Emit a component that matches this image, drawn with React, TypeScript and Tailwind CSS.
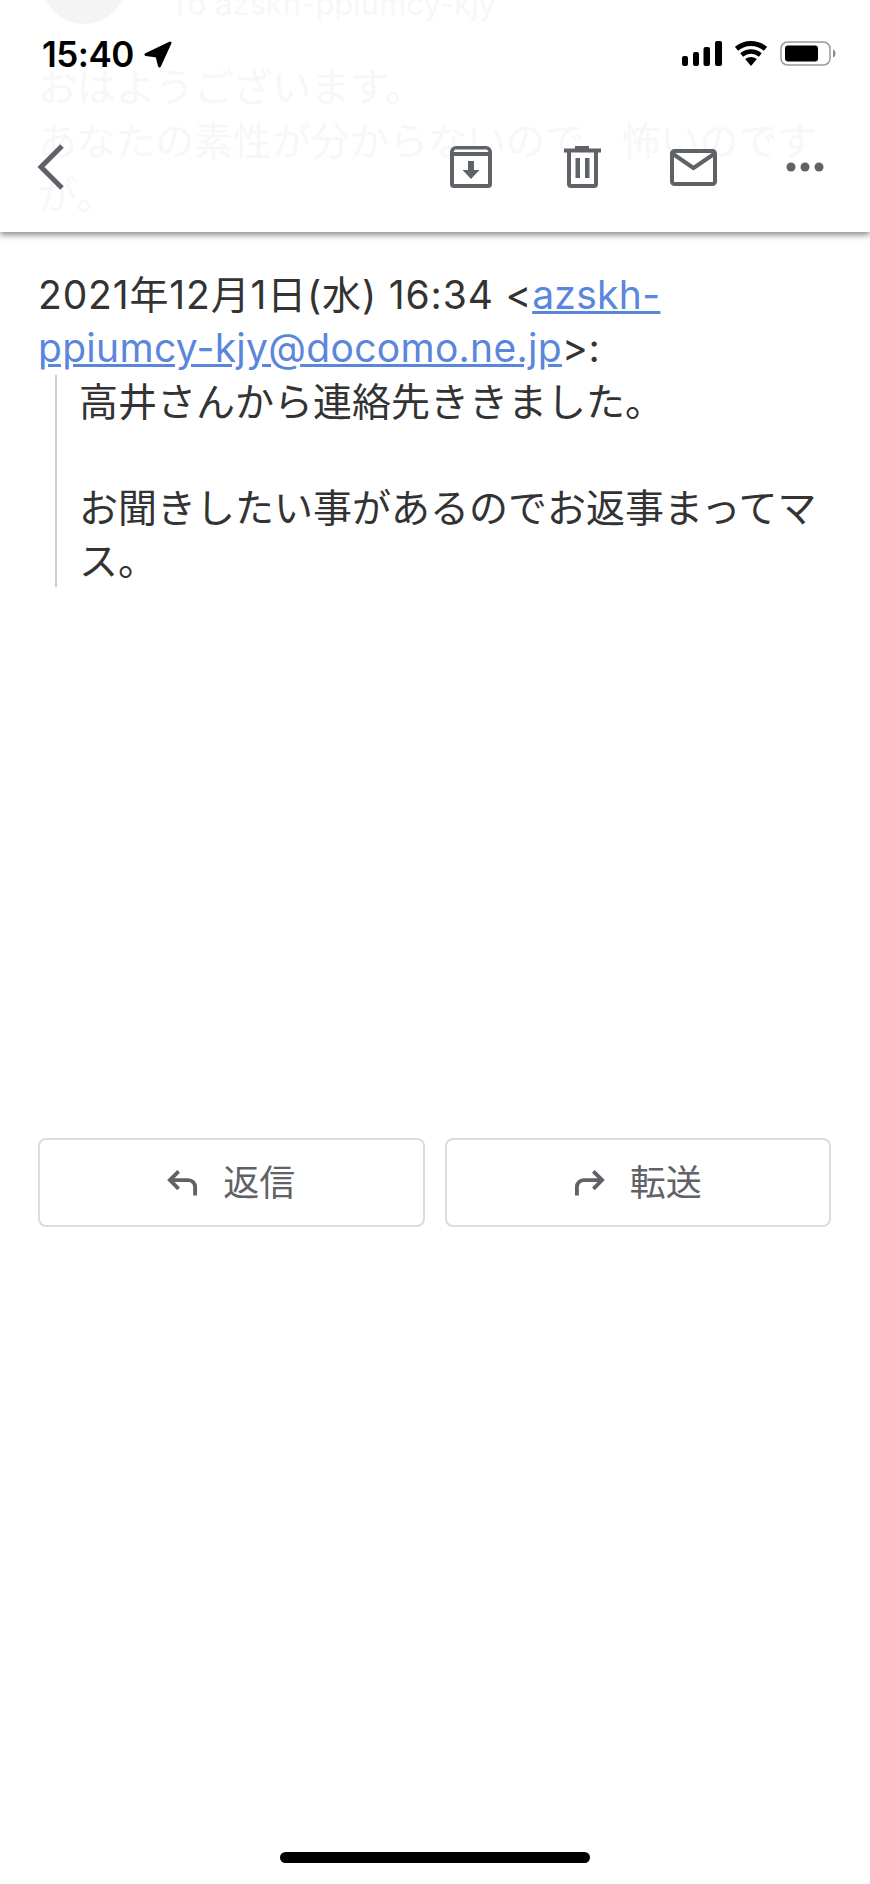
import React from "react";

const JP = "font-['Inter','Noto_Sans_CJK_JP',sans-serif]";

const ArchiveIcon = () => (
  <svg width="42" height="42" viewBox="0 0 42 42">
    <path d="M6 0h30a6 6 0 0 1 6 6v32a4 4 0 0 1-4 4H4a4 4 0 0 1-4-4V6a6 6 0 0 1 6-6z" fill="#5f6368" />
    <path d="M5 3.500h32l1.500 2.500h-35z" fill="#fff" />
    <rect x="4" y="10" width="34" height="28" fill="#fff" />
    <path d="M18 15h6v9h5.500L21 33l-8.500-9H18z" fill="#5f6368" />
  </svg>
);

const TrashIcon = () => (
  <svg width="37" height="42" viewBox="0 0 37 42">
    <path d="M11 0h14v2.500h12v4H0v-4h11z" fill="#5f6368" />
    <path d="M5 6v32a2 2 0 0 0 2 2h23a2 2 0 0 0 2-2V6" fill="none" stroke="#5f6368" strokeWidth="4" />
    <path d="M11.500 12h4.500v20h-4.500zM21 12h4.500v20H21z" fill="#5f6368" />
  </svg>
);

const MailIcon = () => (
  <svg width="47" height="37" viewBox="0 0 47 37">
    <rect x="2" y="2" width="43" height="33" rx="2.500" fill="none" stroke="#5f6368" strokeWidth="4" />
    <path d="M3 5l20.500 14L44 5" fill="none" stroke="#5f6368" strokeWidth="4" />
  </svg>
);

const StatusIcons = () => (
  <div className="flex items-center gap-[13px]">
    <svg width="40" height="25" viewBox="0 0 40 25">
      <rect x="0" y="15" width="6" height="10" rx="2" fill="#000" />
      <rect x="11" y="11" width="6" height="14" rx="2" fill="#000" />
      <rect x="21.500" y="6" width="6.500" height="19" rx="2" fill="#000" />
      <rect x="33" y="0" width="7" height="25" rx="2" fill="#000" />
    </svg>
    <svg width="32" height="25" viewBox="0 0 32 25">
      <path d="M16 25L10.200 18.100A9 9 0 0 1 21.800 18.100z" fill="#000" />
      <path d="M6.700 13.900A14.500 14.500 0 0 1 25.300 13.900" fill="none" stroke="#000" strokeWidth="4.500" />
      <path d="M1.500 7.800A22.500 22.500 0 0 1 30.500 7.800" fill="none" stroke="#000" strokeWidth="5" />
    </svg>
    <svg width="56" height="25" viewBox="0 0 56 25">
      <rect x="1" y="1" width="49" height="23" rx="6.500" fill="none" stroke="#9a9a9a" strokeWidth="1.500" />
      <rect x="5" y="4.500" width="33" height="16" rx="3" fill="#000" />
      <path d="M53 8.500c1.500.5 2.500 2 2.500 4s-1 3.500-2.500 4z" fill="#8a8a8a" />
    </svg>
  </div>
);

const ReplyButton = ({ label, forward }: { label: string; forward?: boolean }) => (
  <button className="flex h-[89px] flex-1 items-center justify-center gap-[25px] rounded-lg border-2 border-[#dadce0] text-[36px] text-[#5f6368]">
    <svg width="31" height="28" viewBox="0 0 32 28" className={forward ? "-scale-x-100" : ""}>
      <path d="M12 2L3 11l9 9" fill="none" stroke="#5f6368" strokeWidth="4" />
      <path d="M4 11h18a7 7 0 0 1 7 7v9" fill="none" stroke="#5f6368" strokeWidth="4" />
    </svg>
    <span>{label}</span>
  </button>
);

export default function App() {
  return (
    <div className={`flex h-[1884px] flex-col overflow-hidden bg-white ${JP}`}>
      <header className="relative h-[232px] shrink-0 bg-white shadow-[0_3px_6px_rgba(0,0,0,0.45)]">
        {/* mail body scrolled under the translucent bar */}
        <div className="absolute inset-0 overflow-hidden text-[#f7f7f7]">
          <div className="absolute left-[42px] top-[-30px] h-[54px] w-[84px] rounded-b-full bg-[#f4f4f4]" />
          <div className="absolute left-[170px] top-[-14px] text-[31px] leading-[36px]">To azskh-ppiumcy-kjy</div>
          <div className="absolute left-[38px] top-[60px] w-[800px] text-[39px] leading-[54px]">
            おはようございます。
            <br />
            あなたの素性が分からないので、怖いのです
            <br />
            が。
          </div>
        </div>

        <div className="relative flex h-[104px] items-start justify-between pl-[42px] pr-[34px] pt-[36px]">
          <div className="flex items-center gap-[10px]">
            <span className="text-[35px] font-semibold leading-[36px] tracking-[-0.5px] text-black">15:40</span>
            <svg width="28" height="27" viewBox="0 0 28 27">
              <path d="M26 2L2 13.500l11 1.500 2.500 10z" fill="#000" stroke="#000" strokeWidth="3" strokeLinejoin="round" />
            </svg>
          </div>
          <div className="pt-[5px]">
            <StatusIcons />
          </div>
        </div>

        <div className="relative flex items-center pl-[37px] pr-[46px] pt-[40px]">
          <svg width="28" height="46" viewBox="0 0 28 46" className="mr-auto">
            <path d="M25 2L4 23l21 21" fill="none" stroke="#5f6368" strokeWidth="5" />
          </svg>
          <div className="flex items-center">
            <ArchiveIcon />
            <div className="ml-[72px]"><TrashIcon /></div>
            <div className="ml-[69px]"><MailIcon /></div>
            <svg width="38" height="10" viewBox="0 0 38 10" className="ml-[69px]">
              <circle cx="5" cy="5" r="4.500" fill="#5f6368" />
              <circle cx="19" cy="5" r="4.500" fill="#5f6368" />
              <circle cx="33" cy="5" r="4.500" fill="#5f6368" />
            </svg>
          </div>
        </div>
      </header>

      <main className="px-[38px] pt-[36px] text-[39px] leading-[53px] text-[#333]">
        <div className="tracking-[0.85px]">
          2021年12月1日(水) 16:34 &lt;
          <a className="tracking-[0.3px] text-[#5a86dc] underline" href="#">azskh-ppiumcy-kjy@docomo.ne.jp</a>
          &gt;:
        </div>
        <blockquote className="ml-[17px] mt-[1px] border-l-2 border-[#ccc] pl-[22px] leading-[53px]">
          高井さんから連絡先ききました。
          <br />
          <br />
          お聞きしたい事があるのでお返事まってマス。
        </blockquote>
      </main>

      <div className="mt-[551px] flex gap-[20px] pl-[38px] pr-[39px]">
        <ReplyButton label="返信" />
        <ReplyButton label="転送" forward />
      </div>

      <div className="mx-auto mb-[21px] mt-auto h-[11px] w-[310px] rounded-full bg-black" />
    </div>
  );
}
